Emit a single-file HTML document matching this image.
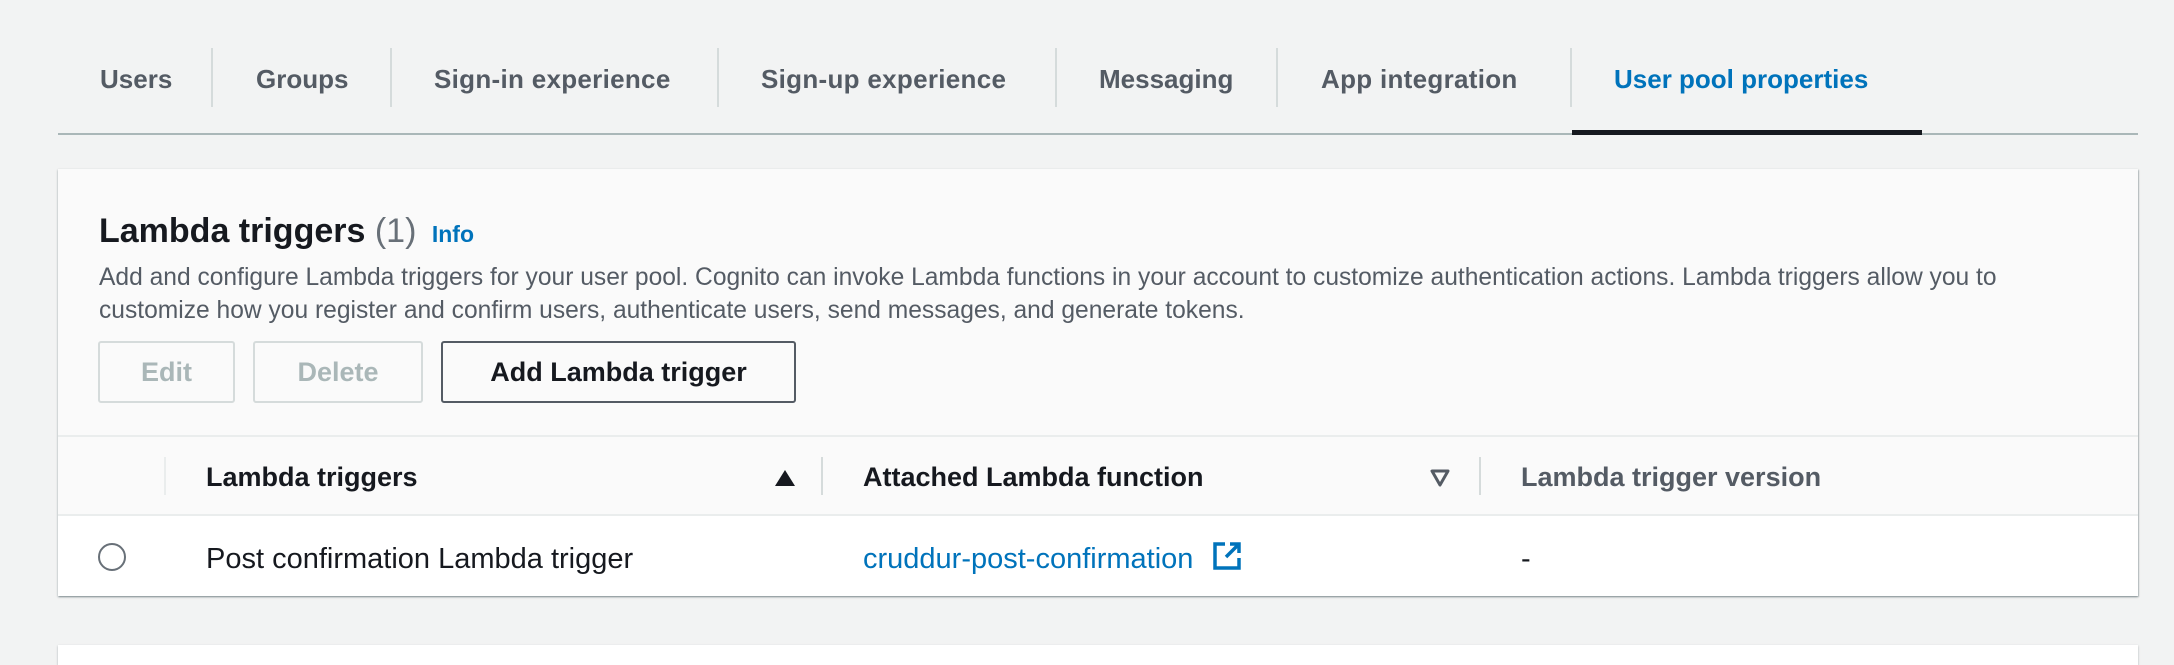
<!DOCTYPE html>
<html><head><style>
body{margin:0;width:2174px;height:650px;background:#f2f3f3;font-family:"Liberation Sans",sans-serif;position:relative;overflow:hidden;color:#16191f}
.a{position:absolute;white-space:nowrap}
.tab{font-weight:bold;font-size:26px;color:#545b64;top:64px}
.sep{position:absolute;top:48px;width:2px;height:59px;background:#d5dbdb}
.btn{position:absolute;top:341px;height:58px;border:2px solid #d5dbdb;border-radius:3px;box-sizing:content-box;font-weight:bold;font-size:27px;color:#aab7b8;display:flex;align-items:center;justify-content:center;background:#fafafa}
.th{font-weight:bold;font-size:27px;top:462px}
.vd{position:absolute;width:2px;background:#d5dbdb;top:457px;height:38px}
</style></head><body>
<div class="a tab" style="left:100px">Users</div>
<div class="sep" style="left:211px"></div>
<div class="a tab" style="left:256px">Groups</div>
<div class="sep" style="left:390px"></div>
<div class="a tab" style="left:434px;letter-spacing:0.3px">Sign-in experience</div>
<div class="sep" style="left:717px"></div>
<div class="a tab" style="left:761px;letter-spacing:0.3px">Sign-up experience</div>
<div class="sep" style="left:1055px"></div>
<div class="a tab" style="left:1099px">Messaging</div>
<div class="sep" style="left:1276px"></div>
<div class="a tab" style="left:1321px;letter-spacing:0.3px">App integration</div>
<div class="sep" style="left:1570px"></div>
<div class="a tab" style="left:1614px;color:#0073bb">User pool properties</div>
<div class="a" style="left:58px;top:133px;width:2080px;height:2px;background:#aab7b8"></div>
<div class="a" style="left:1572px;top:130px;width:350px;height:5px;background:#16191f"></div>

<div class="a" style="left:58px;top:169px;width:2080px;height:427px;background:#fafafa;box-shadow:0 1px 2px rgba(0,28,36,.4),1px 1px 1px rgba(0,28,36,.15)"></div>
<div class="a" style="left:99px;top:212px;font-size:34px;font-weight:bold">Lambda triggers <span style="font-weight:normal;color:#687078">(1)</span> <span style="font-size:23px;color:#0073bb;margin-left:6px">Info</span></div>
<div class="a" style="left:99px;top:261px;font-size:24.6px;line-height:33px;color:#545b64">Add and configure Lambda triggers for your user pool. Cognito can invoke Lambda functions in your account to customize authentication actions. Lambda triggers allow you to<br>customize how you register and confirm users, authenticate users, send messages, and generate tokens.</div>
<div class="btn" style="left:98px;width:133px">Edit</div>
<div class="btn" style="left:253px;width:166px">Delete</div>
<div class="btn" style="left:441px;width:351px;border-color:#545b64;color:#16191f">Add Lambda trigger</div>

<div class="a" style="left:58px;top:435px;width:2080px;height:2px;background:#eaeded"></div>
<div class="vd" style="left:164px;background:#eaeded"></div>
<div class="a th" style="left:206px">Lambda triggers</div>
<div class="a" style="left:775px;top:470px;width:0;height:0;border-left:10px solid transparent;border-right:10px solid transparent;border-bottom:16px solid #16191f"></div>
<div class="vd" style="left:821px"></div>
<div class="a th" style="left:863px">Attached Lambda function</div>
<svg class="a" style="left:1430px;top:469px" width="20" height="18"><path d="M2 2h16L10 16z" fill="none" stroke="#545b64" stroke-width="3" stroke-linejoin="round"/></svg>
<div class="vd" style="left:1479px"></div>
<div class="a th" style="left:1521px;color:#545b64">Lambda trigger version</div>

<div class="a" style="left:58px;top:514px;width:2080px;height:82px;background:#fff;border-top:2px solid #eaeded;box-sizing:border-box"></div>
<div class="a" style="left:98px;top:543px;width:24px;height:24px;border:2px solid #687078;border-radius:50%"></div>
<div class="a" style="left:206px;top:543px;font-size:29px">Post confirmation Lambda trigger</div>
<div class="a" style="left:863px;top:543px;font-size:29px;color:#0073bb">cruddur-post-confirmation</div>
<svg class="a" style="left:1212px;top:541px" width="30" height="30" viewBox="0 0 30 30"><path d="M13 3H3v24h24V17M18 3h9v9M27 3L14 16" fill="none" stroke="#0073bb" stroke-width="3.5"/></svg>
<div class="a" style="left:1521px;top:543px;font-size:29px">-</div>

<div class="a" style="left:58px;top:645px;width:2080px;height:20px;background:#fff;box-shadow:0 1px 2px rgba(0,28,36,.3)"></div>
</body></html>
